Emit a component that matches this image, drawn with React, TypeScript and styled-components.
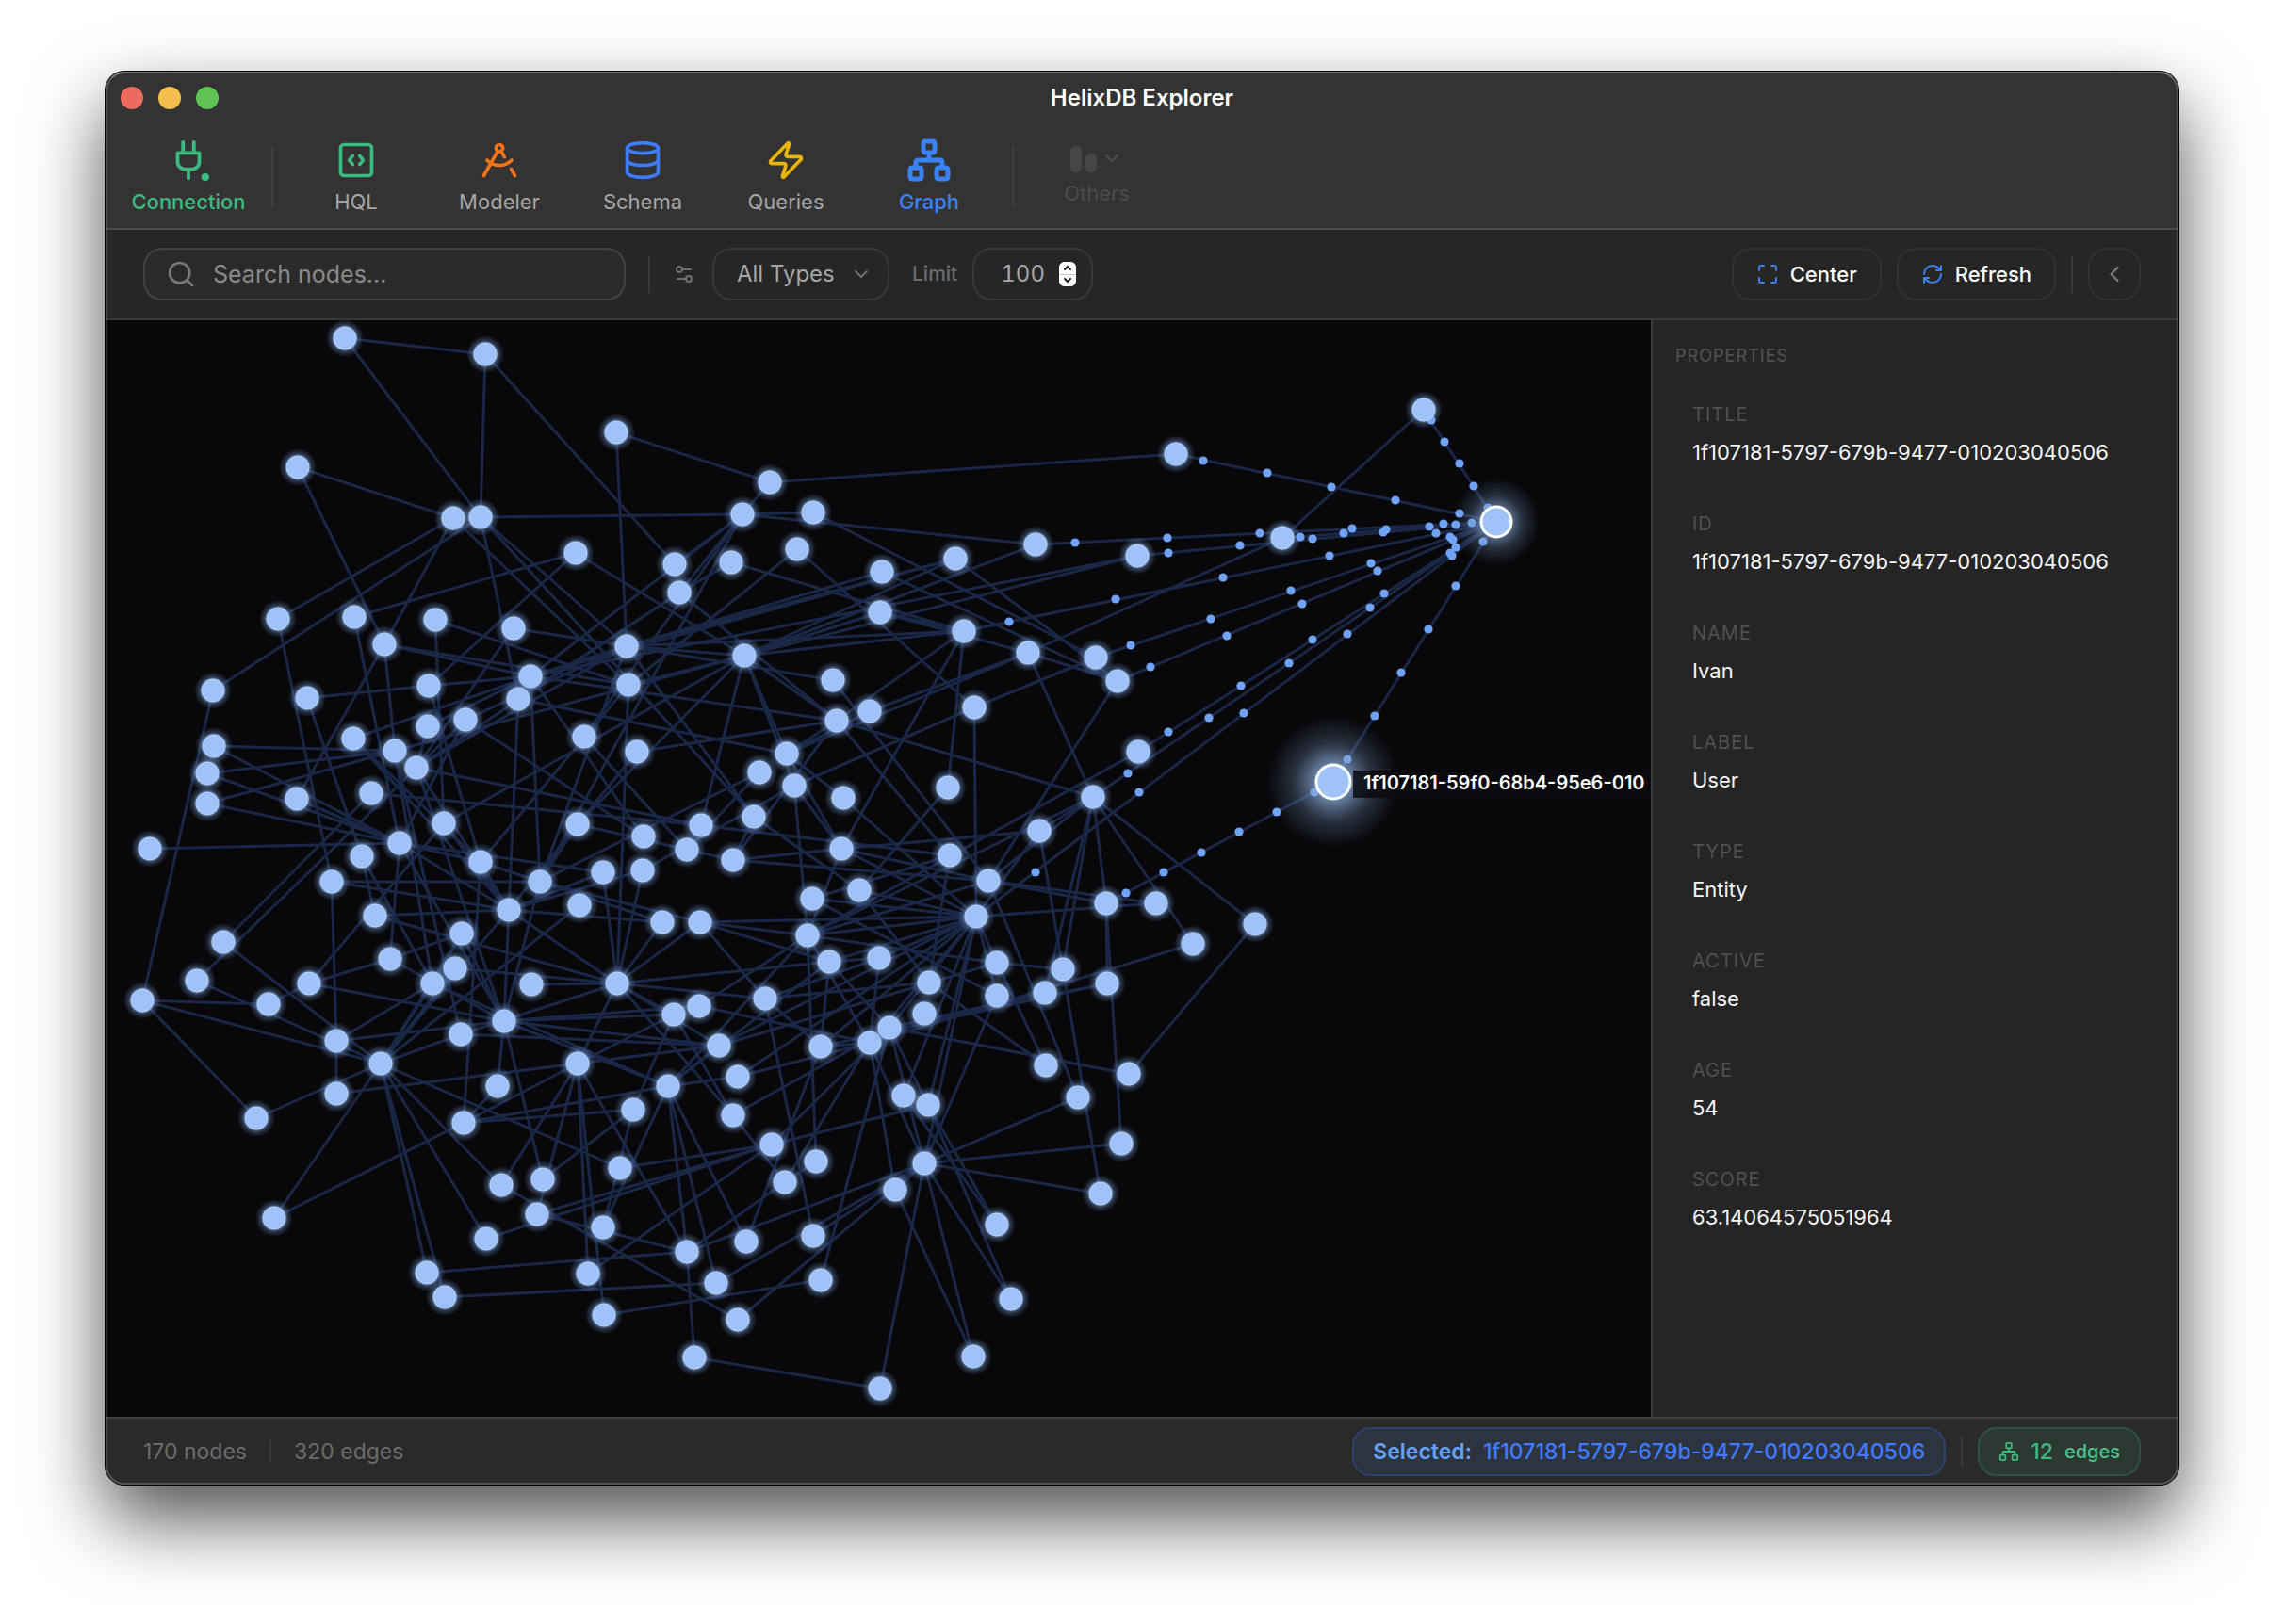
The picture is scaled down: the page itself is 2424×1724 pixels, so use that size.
import React, { useState } from 'react';
import styled, { createGlobalStyle, css } from 'styled-components';
import {
  ChevronDown,
  ChevronLeft,
  Database,
  DraftingCompass,
  Maximize,
  Network,
  RefreshCw,
  Search,
  Settings2,
  Zap,
} from 'lucide-react';

const colors = {
  header: '#333333',
  bar: '#262626',
  panel: '#252525',
  footer: '#2a2a2a',
  canvas: '#08080b',
  line: '#383838',
  lineStrong: '#4b4b4b',
  text: '#f5f5f5',
  textSoft: '#a6a6a6',
  textDim: '#707070',
  textFaint: '#505050',
  green: '#3dba80',
  blue: '#3b82f6',
  indigo: '#3f7bff',
  orange: '#f97316',
  yellow: '#eab308',
};

const GlobalStyle = createGlobalStyle`
  *, *::before, *::after { box-sizing: border-box; }
  body {
    margin: 0;
    background: #ffffff;
    color: ${colors.text};
    font-family: Inter, 'Liberation Sans', sans-serif;
    font-size: 22px;
    line-height: 28px;
  }
  button, input, select { font: inherit; color: inherit; }
`;

const Desktop = styled.div`
  min-height: 100vh;
  padding: 76px 112px 148px;
  display: flex;
  overflow: hidden;
`;

const AppWindow = styled.div`
  position: relative;
  flex: 1;
  min-width: 0;
  display: flex;
  flex-direction: column;
  border-radius: 20px;
  background: ${colors.bar};
  box-shadow: 0 0 0 1px #000000, 0 36px 80px rgba(0, 0, 0, 0.7);

  &::after {
    content: '';
    position: absolute;
    inset: 0;
    border: 2px solid rgba(255, 255, 255, 0.2);
    border-top-color: rgba(255, 255, 255, 0.32);
    border-radius: 20px;
    pointer-events: none;
  }
`;

const Header = styled.header`
  background: ${colors.header};
  border-bottom: 2px solid ${colors.lineStrong};
  border-radius: 20px 20px 0 0;
`;

const TitleBar = styled.div`
  display: grid;
  grid-template-columns: 1fr auto 1fr;
  align-items: center;
  height: 56px;
  padding: 0 16px;
`;

const Lights = styled.div`
  display: flex;
  gap: 16px;
`;

const Light = styled.button<{ $color: string }>`
  width: 24px;
  height: 24px;
  padding: 0;
  border: 0;
  border-radius: 50%;
  background: ${(p) => p.$color};
`;

const Title = styled.h1`
  margin: 0;
  font-size: 24px;
  font-weight: 600;
  color: #ffffff;
`;

const Nav = styled.nav`
  display: flex;
  align-items: center;
  gap: 16px;
  height: 110px;
  padding: 0 16px;
`;

const NavGroup = styled.div`
  display: flex;
  gap: 8px;
`;

const Divider = styled.span<{ $height: number; $color?: string }>`
  flex: none;
  width: 2px;
  height: ${(p) => p.$height}px;
  background: ${(p) => p.$color ?? colors.line};
`;

const NavButton = styled.button<{ $active?: boolean; $color?: string }>`
  width: 144px;
  display: flex;
  flex-direction: column;
  align-items: center;
  gap: 6px;
  padding: 0;
  border: 0;
  background: none;
  font-size: 22px;
  color: ${(p) => (p.$active ? p.$color : colors.textSoft)};
  font-weight: ${(p) => (p.$active ? 500 : 400)};

  &:disabled {
    gap: 4px;
    color: #4b4b4b;
  }
`;

const NavIcon = styled.span<{ $color?: string; $short?: boolean }>`
  display: flex;
  align-items: center;
  justify-content: center;
  height: ${(p) => (p.$short ? 32 : 48)}px;
  color: ${(p) => p.$color};
`;

const Toolbar = styled.div`
  display: flex;
  align-items: center;
  gap: 16px;
  height: 96px;
  padding: 0 40px;
  background: ${colors.bar};
  border-bottom: 2px solid ${colors.line};
`;

const ToolGroup = styled.div<{ $gap: number }>`
  display: flex;
  align-items: center;
  gap: ${(p) => p.$gap}px;
  color: ${colors.textDim};
`;

const Spacer = styled.div`
  flex: 1;
`;

const field = css`
  display: flex;
  align-items: center;
  height: 56px;
  border: 2px solid ${colors.line};
  border-radius: 20px;
`;

const SearchBox = styled.label`
  ${field}
  width: 512px;
  gap: 18px;
  padding: 0 22px;
  background: #2a2a2a;
  border-color: #424242;
  color: #7a7a7a;
`;

const SearchInput = styled.input`
  flex: 1;
  min-width: 0;
  padding: 0;
  border: 0;
  outline: 0;
  background: none;
  font-size: 25px;
  color: ${colors.text};

  &::placeholder { color: #8a8a8a; opacity: 1; }
`;

const SelectBox = styled.div`
  display: grid;
  align-items: center;
  width: 188px;
  color: ${colors.textDim};

  & > * { grid-area: 1 / 1; }
  & > svg {
    justify-self: end;
    margin-right: 18px;
    pointer-events: none;
  }
`;

const TypeSelect = styled.select`
  ${field}
  width: 100%;
  padding: 0 24px;
  appearance: none;
  background: none;
  font-size: 24px;
  color: ${colors.textSoft};
`;

const LimitLabel = styled.label`
  font-size: 21px;
  font-weight: 500;
  color: #6c6c6c;
`;

const NumberBox = styled.div`
  ${field}
  width: 128px;
  justify-content: space-between;
  padding: 0 16px 0 28px;
`;

const NumberInput = styled.input`
  width: 56px;
  padding: 0;
  border: 0;
  outline: 0;
  background: none;
  appearance: textfield;
  font-size: 24px;
  font-variant-numeric: tabular-nums;
  color: ${colors.textSoft};

  &::-webkit-inner-spin-button,
  &::-webkit-outer-spin-button { appearance: none; margin: 0; }
`;

const Stepper = styled.div`
  display: grid;
  gap: 1px;
  width: 18px;
  height: 26px;
  border-radius: 6px;
  overflow: hidden;
  background: #c8c8c8;
`;

const StepButton = styled.button`
  display: flex;
  align-items: center;
  justify-content: center;
  padding: 0;
  border: 0;
  background: #ffffff;
`;

const ActionButton = styled.button`
  ${field}
  gap: 12px;
  padding: 0 24px;
  background: none;
  font-size: 22px;
  font-weight: 500;
  color: #ffffff;
  border-color: #313131;

  & > svg { color: ${colors.blue}; }
`;

const IconButton = styled.button`
  ${field}
  justify-content: center;
  width: 56px;
  padding: 0;
  background: none;
  color: #7c7c7c;
  border-color: #313131;
`;

const Body = styled.main`
  flex: 1;
  min-height: 0;
  display: grid;
  grid-template-columns: minmax(0, 1fr) 560px;
`;

const GraphPane = styled.section`
  display: grid;
  overflow: hidden;
  background: ${colors.canvas};
`;

const GraphSvg = styled.svg`
  display: block;
  width: 100%;
  height: 100%;
  min-height: 0;
`;

const NodeLabel = styled.text`
  font-family: Inter, 'Liberation Sans', sans-serif;
  font-size: 20px;
  font-weight: 600;
  fill: #ffffff;
`;

const Panel = styled.aside`
  padding: 26px 24px;
  border-left: 2px solid #3d3d3d;
  background: ${colors.panel};
`;

const PanelTitle = styled.h2`
  margin: 0 0 38px;
  font-size: 18px;
  font-weight: 500;
  line-height: 24px;
  letter-spacing: 1px;
  color: #4e4e4e;
`;

const Properties = styled.dl`
  display: grid;
  gap: 50px;
  margin: 0;
  padding: 0 18px;
`;

const Property = styled.div`
  display: grid;
  gap: 14px;
`;

const PropertyName = styled.dt`
  font-size: 20px;
  line-height: 24px;
  letter-spacing: 1px;
  color: ${colors.textFaint};
`;

const PropertyValue = styled.dd`
  margin: 0;
  font-size: 22px;
`;

const StatusBar = styled.footer`
  display: flex;
  align-items: center;
  gap: 16px;
  height: 72px;
  padding: 0 40px;
  border-top: 2px solid #404040;
  border-radius: 0 0 20px 20px;
  background: ${colors.footer};
  font-size: 23px;
`;

const Counts = styled.div`
  display: flex;
  align-items: center;
  gap: 24px;
  color: #6c6c6c;
`;

const Pill = styled.div<{ $tone: 'blue' | 'green' }>`
  display: flex;
  align-items: center;
  gap: 12px;
  height: 52px;
  padding: 0 20px;
  border: 2px solid ${(p) => (p.$tone === 'blue' ? '#2c4270' : '#2c5440')};
  border-radius: 20px;
  background: ${(p) => (p.$tone === 'blue' ? '#2d333f' : '#2c3832')};
  color: ${(p) => (p.$tone === 'blue' ? colors.indigo : colors.green)};
  font-weight: 500;
`;

const PillLabel = styled.span`
  font-weight: 600;
  color: #64a0f8;
`;

const PillUnit = styled.span`
  font-size: 20px;
  color: #4fc490;
`;

type Point = [number, number];

const NODES: Record<string, Point> = {
  a0: [366, 359], a1: [515, 376], a2: [654, 459], a3: [316, 496], a4: [481, 550], a5: [510, 549],
  a6: [611, 587], a7: [295, 657], a8: [376, 655], a9: [462, 658], a10: [545, 667], a11: [408, 684],
  a12: [665, 686], a13: [226, 733], a14: [326, 741], a15: [455, 728], a16: [563, 718], a17: [550, 742],
  a18: [667, 727], a19: [454, 771], a20: [494, 764], a21: [375, 784], a22: [419, 797], a23: [442, 815],
  a24: [227, 792], a25: [220, 821], a26: [220, 853], a27: [315, 848], a28: [394, 842], a29: [620, 782],
  a30: [676, 798], a31: [471, 874], a32: [424, 895], a33: [384, 909], a34: [510, 915], a35: [159, 901],
  a36: [613, 875], a37: [683, 888], a38: [640, 926], a39: [682, 924], a40: [352, 936], a41: [573, 936],
  b0: [817, 512], b1: [788, 546], b2: [863, 544], b3: [716, 599], b4: [721, 629], b5: [776, 597],
  b6: [846, 583], b7: [936, 607], b8: [934, 650], b9: [1014, 593], b10: [1099, 578], b11: [1207, 590],
  b12: [1248, 482], b13: [1023, 670], b14: [1091, 693], b15: [1163, 698], b16: [1186, 723], b17: [790, 696],
  b18: [884, 722], b19: [923, 755], b20: [888, 765], b21: [1034, 751], b22: [1208, 798], b23: [835, 800],
  b24: [806, 820], b25: [843, 834], b26: [895, 847], b27: [1006, 836], b28: [1160, 846], b29: [800, 867],
  b30: [744, 876], b31: [1103, 882], b32: [729, 902], b33: [778, 913], b34: [893, 901], b35: [1008, 908],
  b36: [1049, 935], b37: [912, 945], b38: [862, 954], b39: [1036, 973], b40: [1174, 959], b41: [1227, 959],
  b42: [703, 979], b43: [743, 979], b44: [857, 993], b45: [880, 1021], b46: [933, 1017], b47: [1058, 1022],
  b48: [1128, 1029], b49: [1266, 1002],
  c0: [398, 972], c1: [237, 1000], c2: [209, 1041], c3: [151, 1062], c4: [285, 1066], c5: [328, 1044],
  c6: [414, 1018], c7: [490, 991], c8: [540, 966], c9: [483, 1028], c10: [459, 1044], c11: [357, 1105],
  c12: [404, 1129], c13: [357, 1161], c14: [272, 1187], c15: [489, 1098], c16: [535, 1084], c17: [528, 1153],
  c18: [492, 1192], c19: [291, 1293], c20: [532, 1258], c21: [516, 1315], c22: [453, 1351], c23: [472, 1377],
  d0: [615, 961], d1: [564, 1045], d2: [655, 1044], d3: [715, 1077], d4: [742, 1068], d5: [812, 1060],
  d6: [613, 1129], d7: [763, 1110], d8: [709, 1153], d9: [783, 1143], d10: [672, 1178], d11: [778, 1184],
  d12: [819, 1215], d13: [833, 1255], d14: [866, 1233], d15: [871, 1111], d16: [923, 1107], d17: [944, 1091],
  d18: [658, 1240], d19: [576, 1252], d20: [570, 1289], d21: [640, 1303], d22: [624, 1352], d23: [729, 1329],
  d24: [792, 1318], d25: [863, 1312], d26: [760, 1362], d27: [871, 1359], d28: [641, 1396], d29: [783, 1401],
  e1: [986, 1043], e2: [981, 1076], e3: [1058, 1057], e4: [1109, 1054], e5: [1175, 1044], e6: [1332, 981],
  e7: [1110, 1131], e8: [1198, 1140], e9: [1144, 1165], e10: [1190, 1214], e11: [1168, 1267], e12: [959, 1163],
  e13: [985, 1173], e14: [981, 1235], e15: [950, 1263], e16: [1058, 1300], e17: [1073, 1379],
  z0: [737, 1441], z1: [934, 1474], z2: [1033, 1440],
  r0: [1511, 435], r1: [1361, 571], hov: [1415, 830], sel: [1588, 554],
};

const EDGES = `
a0-a1 a0-a5 a1-a5 a1-b3 a2-b0 a2-a12 a3-a4 a3-a11 a4-a7 a4-a11 a5-a13 a5-b1 a5-a12 a4-a18 a5-b29 a5-a17
a6-a8 a6-a15 a6-b17 a7-a40 a8-a32 a9-a18 a9-a31 a10-a12 a10-a23 a11-a18 a11-a16 a11-a22 a11-a27
a12-b17 a12-b13 a12-b18 a12-a16 a12-a20 a12-b29 a12-a41 a12-b7 a12-b9 a14-a15 a14-a33 a15-a16 a15-a34
a16-b9 a16-b11 a16-b1 a16-a41 a16-a37 a16-b20 a17-c8 a17-b23 a17-b4 a18-b6 a18-b17 a18-d2 a18-a34
a19-a23 a19-a16 a20-a23 a20-a32 a20-a37 a21-a16 a21-c8 a21-a34 a22-a24 a22-a25 a22-a26 a22-b17 a23-b4 a23-a12 a24-a32 a25-a32 a26-a32
a27-a32 a28-c1 a23-c2 a13-c3 a28-b30 a29-b1 a29-b32 a30-b20 a30-a36 a31-c5 a31-c8 a31-b17 a32-a35 a32-a34
a32-a38 a32-c8 a32-c16 a32-c6 a33-c0 a33-c10 a34-c18 a34-c8 a34-a41 a36-b32 a36-a41 a22-c10 a22-c15 a23-c16
a23-c8 a23-b30 a40-c11 a40-c8 a40-a41 b1-a41
b0-b12 b0-b1 b1-b2 b1-b10 b1-b4 b1-b3 b4-b5 b4-b20 b2-b15 b7-b16 b9-b16 b5-b13 b6-b21 b17-b9 b17-b11
b17-b10 b17-b8 b8-b13 b8-b14 b17-b13 b13-b20 b13-b34 b13-b27 b14-b19 b14-b28 b14-b16 b15-b21 r1-b14 r0-r1
b14-b23 b16-b36 b17-b23 b17-b20 b17-b30 b17-a36 b17-b25 b18-b36 b20-b28 b20-b35 b20-b23 b20-b33 b19-b23
b21-b25 b21-b39 b22-b44 b23-b26 b23-b34 b24-b32 b24-a41 b25-b34 b25-b44 b25-a39 b26-b39 b27-b37 b28-b31
b28-b44 b28-b48 b28-e4 b28-b40 b28-b49 b28-e6 b28-b36 b31-b34 b31-b39 b31-b48 b29-b33 b29-b37 b30-b35
b32-b33 b33-b34 b33-b36 b34-b36 b34-b39 b34-b44 b35-b38 b35-e1 b36-b40 b36-b41 b36-b44 b36-e9 b37-b39
b38-b39 b39-b41 b39-b43 b39-b44 b39-b45 b39-b46 b39-e13 b39-e14 b39-e12 b39-b47 b39-e3 b39-d15 b39-d16
b39-d17 b39-d7 b39-d9 b40-e5 b40-e10 b47-b48 b47-e7 e3-e14 d17-e5 d16-b49 d15-e5 d17-e4 d17-e8 e1-e7 e6-e8
b48-e11 e9-e14 e10-e14 e11-e14 e13-e16 e12-e16 e13-e17 e14-e17 e14-e15 e14-z1 e14-z2 e15-z2 z0-z1 d23-z0
e14-d23 e14-d26 e14-d25 e14-d29 e13-d12
c1-c12 c2-c12 c3-c4 c3-c12 c3-c14 c4-c5 c5-c6 c5-c16 c6-c7 c6-c16 c7-c10 c8-c12 c7-c12 c9-c12 c10-c11
c10-c12 c11-c13 c11-c16 c12-c14 c12-c15 c12-c19 c12-c20 c12-c21 c12-c22 c12-c23 c12-d18 c13-d6 c15-d7
c16-c17 c16-d19 c18-c19 c18-c17 c18-d6 c18-d8 c18-d10 c20-d6 c20-d29 c21-d12 c22-d23 c23-d26 c0-c8 c0-d2
c8-d2 c8-a38 c8-a39 c8-b42 c8-a36 c8-c16 c7-c16 c9-d2 c10-d8
a41-b42 a41-b43 a41-c16 a38-d2 a39-d2 b42-d2 b43-d2 d2-d6 d2-c15 d2-d5 d2-b45 d2-d7 d2-d11 d2-d3 d1-d2
d0-c12 c16-d3 c16-d4 c16-d7 c16-d8 d3-d6 d3-d10 d3-d11 d4-d16 d4-b44 d5-b46 d5-e1 d5-d25 d5-d15 d6-d7 d6-d22
d6-d28 d6-d20 d6-d23 d7-d8 d7-b47 d8-d9 d8-d26 d8-d23 d8-d24 d8-d21 d8-b44 d8-b45 d9-d16 d10-d21 d10-d19
d11-d13 d11-d17 d12-d17 d12-d18 d12-d20 d12-d22 d13-d14 d13-d16 d13-d23 d14-b44 d15-d24 d15-d16 d16-e14
d16-e15 d17-d27 d17-e14 d17-e13 d20-d23 d28-d27 b44-b47 b43-b44 b43-b45 b43-d5 b45-b46 b45-d15 b46-d16
b38-e3 b37-e1 b44-d16 b45-d17
sel-r0 sel-b12 sel-b10 sel-b11 sel-r1 sel-b13 sel-b15 sel-b16 sel-b22 sel-b28 sel-b39 sel-hov hov-b40
`.trim().split(/\s+/).map((pair) => pair.split('-'));

const PARTICLES: Point[] = [
  [1519, 446], [1533, 469], [1549, 492], [1564, 516], [1579, 539], [1277, 489], [1345, 502], [1413, 517],
  [1481, 531], [1549, 545], [1337, 566], [1435, 561], [1517, 559], [1532, 556], [1545, 557], [1562, 555],
  [1380, 570], [1393, 572], [1426, 566], [1468, 565], [1471, 562], [1316, 579], [1524, 566], [1539, 570],
  [1542, 573], [1545, 581], [1539, 587], [1541, 590], [1411, 590], [1455, 598], [1462, 606], [1370, 627],
  [1382, 641], [1469, 630], [1454, 645], [1430, 673], [1393, 679], [1368, 704], [1317, 728], [1320, 757],
  [1574, 575], [1545, 622], [1516, 668], [1487, 714], [1459, 760], [1430, 806], [1395, 841], [1355, 862],
  [1315, 883], [1302, 675], [1298, 613], [1141, 576], [1239, 571], [1240, 587], [1184, 636], [1071, 660],
  [1200, 685], [1285, 657], [1221, 708], [1240, 777], [1283, 762], [1197, 821], [1209, 841], [1099, 926],
  [1275, 905], [1235, 926], [1195, 948],
];

const PROPERTIES = [
  ['TITLE', '1f107181-5797-679b-9477-010203040506'],
  ['ID', '1f107181-5797-679b-9477-010203040506'],
  ['NAME', 'Ivan'],
  ['LABEL', 'User'],
  ['TYPE', 'Entity'],
  ['ACTIVE', 'false'],
  ['AGE', '54'],
  ['SCORE', '63.14064575051964'],
];

function PlugIcon() {
  return (
    <svg width="46" height="46" viewBox="0 0 24 24" fill="none" stroke="currentColor" strokeWidth="2" strokeLinecap="round" strokeLinejoin="round" overflow="visible">
      <path d="M12 22v-5M9 8V2M15 8V2M18 8v5a4 4 0 0 1-4 4h-4a4 4 0 0 1-4-4V8Z" />
      <circle cx="21.3" cy="21.4" r="2.2" fill="currentColor" stroke="none" />
    </svg>
  );
}

function CodeSquareIcon() {
  return (
    <svg width="44" height="44" viewBox="0 0 24 24" fill="none" stroke="currentColor" strokeWidth="2" strokeLinecap="round" strokeLinejoin="round">
      <rect x="3" y="3" width="18" height="18" rx="2" />
      <path d="M10 9.5 8 12l2 2.5M14 9.5l2 2.5-2 2.5" />
    </svg>
  );
}

function OthersIcon() {
  return (
    <svg width="60" height="32" viewBox="0 0 60 32" fill="none">
      <rect x="2" y="0" width="12" height="28" rx="5" fill="#454545" />
      <rect x="18" y="8" width="12" height="20" rx="5" fill="#454545" />
      <path d="m40 10 6 6 6-6" stroke="#4b4b4b" strokeWidth="2" strokeLinecap="round" strokeLinejoin="round" />
    </svg>
  );
}

function Graph() {
  const [selected, hovered] = [NODES.sel, NODES.hov];
  return (
    <GraphSvg viewBox="112 340 1640 1164" preserveAspectRatio="xMidYMid slice" role="img" aria-label="Node graph">
      <defs>
        <radialGradient id="halo">
          <stop offset="0.58" stopColor="#a5c8fa" stopOpacity="0.75" />
          <stop offset="0.72" stopColor="#7fa8e5" stopOpacity="0.3" />
          <stop offset="1" stopColor="#7fa8e5" stopOpacity="0" />
        </radialGradient>
        <radialGradient id="glow">
          <stop offset="0.25" stopColor="#8db0e0" stopOpacity="0.75" />
          <stop offset="0.6" stopColor="#7c99c4" stopOpacity="0.28" />
          <stop offset="1" stopColor="#6f88b0" stopOpacity="0" />
        </radialGradient>
      </defs>
      <g stroke="#1a2747" strokeWidth="3">
        {EDGES.map(([from, to]) => (
          <line key={`${from}-${to}`} x1={NODES[from][0]} y1={NODES[from][1]} x2={NODES[to][0]} y2={NODES[to][1]} />
        ))}
      </g>
      <g fill="#70a3f6">
        {PARTICLES.map(([x, y]) => (
          <circle key={`${x}-${y}`} cx={x} cy={y} r="4.6" />
        ))}
      </g>
      {Object.entries(NODES)
        .filter(([id]) => id !== 'sel' && id !== 'hov')
        .map(([id, [x, y]]) => (
          <g key={id}>
            <circle cx={x} cy={y} r="20" fill="url(#halo)" />
            <circle cx={x} cy={y} r="12" fill="#9fc3f9" stroke="#b4cff8" strokeWidth="1" />
          </g>
        ))}
      <circle cx={selected[0]} cy={selected[1]} r="46" fill="url(#glow)" />
      <circle cx={selected[0]} cy={selected[1]} r="16" fill="#9fc3f9" stroke="#ffffff" strokeWidth="3" />
      <circle cx={hovered[0]} cy={hovered[1]} r="70" fill="url(#glow)" />
      <circle cx={hovered[0]} cy={hovered[1]} r="18" fill="#9fc3f9" stroke="#ffffff" strokeWidth="3" />
      <rect x={hovered[0] + 21} y={hovered[1] - 12} width="420" height="29" fill="#0a0b0f" fillOpacity="0.85" />
      <NodeLabel x={hovered[0] + 32} y={hovered[1] + 8}>1f107181-59f0-68b4-95e6-010</NodeLabel>
    </GraphSvg>
  );
}

export default function App() {
  const [limit, setLimit] = useState(100);
  return (
    <>
      <GlobalStyle />
      <Desktop>
        <AppWindow>
          <Header>
            <TitleBar>
              <Lights>
                <Light $color="#ed6a5e" aria-label="Close" />
                <Light $color="#f5bf4f" aria-label="Minimize" />
                <Light $color="#61c554" aria-label="Zoom" />
              </Lights>
              <Title>HelixDB Explorer</Title>
            </TitleBar>
            <Nav>
              <NavButton $active $color={colors.green}>
                <NavIcon><PlugIcon /></NavIcon>
                Connection
              </NavButton>
              <Divider $height={64} $color="#404040" />
              <NavGroup>
                <NavButton>
                  <NavIcon $color={colors.green}><CodeSquareIcon /></NavIcon>
                  HQL
                </NavButton>
                <NavButton>
                  <NavIcon $color={colors.orange}><DraftingCompass size={44} /></NavIcon>
                  Modeler
                </NavButton>
                <NavButton>
                  <NavIcon $color={colors.indigo}><Database size={44} /></NavIcon>
                  Schema
                </NavButton>
                <NavButton>
                  <NavIcon $color={colors.yellow}><Zap size={44} /></NavIcon>
                  Queries
                </NavButton>
                <NavButton $active $color={colors.blue}>
                  <NavIcon><Network size={48} strokeWidth={2.5} /></NavIcon>
                  Graph
                </NavButton>
              </NavGroup>
              <Divider $height={64} $color="#404040" />
              <NavButton disabled>
                <NavIcon $short><OthersIcon /></NavIcon>
                Others
              </NavButton>
            </Nav>
          </Header>

          <Toolbar>
            <ToolGroup $gap={24}>
              <SearchBox>
                <Search size={32} strokeWidth={2} />
                <SearchInput type="text" placeholder="Search nodes..." aria-label="Search nodes" />
              </SearchBox>
              <Divider $height={40} />
              <ToolGroup $gap={18}>
                <Settings2 size={24} strokeWidth={2} />
                <SelectBox>
                  <TypeSelect aria-label="Node type" defaultValue="all">
                    <option value="all">All Types</option>
                  </TypeSelect>
                  <ChevronDown size={24} />
                </SelectBox>
              </ToolGroup>
              <ToolGroup $gap={16}>
                <LimitLabel htmlFor="limit">Limit</LimitLabel>
                <NumberBox>
                  <NumberInput id="limit" type="number" value={limit} onChange={(e) => setLimit(Number(e.target.value))} />
                  <Stepper>
                    <StepButton aria-label="Increase limit" onClick={() => setLimit(limit + 1)}>
                      <svg width="10" height="6" viewBox="0 0 10 6" fill="none" stroke="#222222" strokeWidth="2" strokeLinecap="round"><path d="m2 5 3-3 3 3" /></svg>
                    </StepButton>
                    <StepButton aria-label="Decrease limit" onClick={() => setLimit(limit - 1)}>
                      <svg width="10" height="6" viewBox="0 0 10 6" fill="none" stroke="#222222" strokeWidth="2" strokeLinecap="round"><path d="m2 1 3 3 3-3" /></svg>
                    </StepButton>
                  </Stepper>
                </NumberBox>
              </ToolGroup>
            </ToolGroup>
            <Spacer />
            <ActionButton><Maximize size={24} />Center</ActionButton>
            <ActionButton><RefreshCw size={24} />Refresh</ActionButton>
            <Divider $height={40} />
            <IconButton aria-label="Collapse panel"><ChevronLeft size={28} /></IconButton>
          </Toolbar>

          <Body>
            <GraphPane>
              <Graph />
            </GraphPane>
            <Panel>
              <PanelTitle>PROPERTIES</PanelTitle>
              <Properties>
                {PROPERTIES.map(([name, value]) => (
                  <Property key={name}>
                    <PropertyName>{name}</PropertyName>
                    <PropertyValue>{value}</PropertyValue>
                  </Property>
                ))}
              </Properties>
            </Panel>
          </Body>

          <StatusBar>
            <Counts>
              <span>170 nodes</span>
              <Divider $height={24} />
              <span>320 edges</span>
            </Counts>
            <Spacer />
            <Pill $tone="blue">
              <PillLabel>Selected:</PillLabel>
              <span>1f107181-5797-679b-9477-010203040506</span>
            </Pill>
            <Divider $height={32} />
            <Pill $tone="green">
              <Network size={22} />
              <span>12</span>
              <PillUnit>edges</PillUnit>
            </Pill>
          </StatusBar>
        </AppWindow>
      </Desktop>
    </>
  );
}
